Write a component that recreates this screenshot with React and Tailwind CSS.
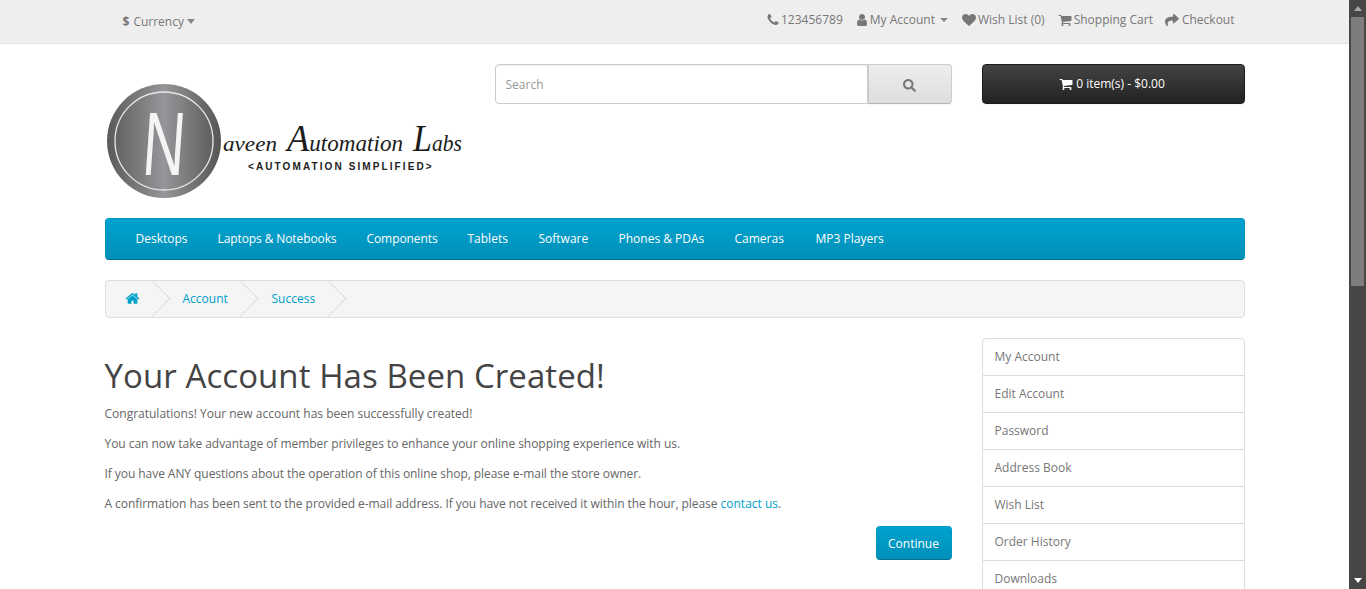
import React from 'react';
import { FaSearch, FaShare } from 'react-icons/fa';

// FontAwesome 4 glyphs, the fa package only ships the newer shapes
const PHONE = 'M1600 1240q0 27-10 70.5t-21 68.5q-21 50-122 106-94 51-186 51-27 0-53-3.5t-57.5-12.5-47-14.5-55.5-20.5-49-18q-98-35-175-83-127-79-264-216t-216-264q-48-77-83-175-3-9-18-49t-20.5-55.5-14.5-47-12.5-57.5-3.5-53q0-92 51-186 56-101 106-122 25-11 68.5-21t70.5-10q14 0 21 3 18 6 53 76 11 19 30 54t35 63.5 31 53.5q3 4 17.5 25t21.5 35.5 7 28.5q0 20-28.5 50t-62 55-62 53-28.5 46q0 9 5 22.5t8.5 20.5 14 24 11.5 19q76 137 174 235t235 174q2 1 19 11.5t24 14 20.5 8.5 22.5 5q18 0 46-28.5t53-62 55-62 50-28.5q14 0 28.5 7t35.5 21.5 25 17.5q25 15 53.5 31t63.5 35 54 30q70 35 76 53 3 7 3 21z';
const USER = 'M1536 1399q0 109-62.5 187t-150.5 78h-854q-88 0-150.5-78t-62.5-187q0-85 8.5-160.5t31.5-152 58.5-131 94-89 134.5-34.5q131 128 313 128t313-128q76 0 134.5 34.5t94 89 58.5 131 31.5 152 8.5 160.5zm-256-887q0 159-112.5 271.5t-271.5 112.5-271.5-112.5-112.5-271.5 112.5-271.5 271.5-112.5 271.5 112.5 112.5 271.5z';
const HEART = 'M896 1664q-26 0-44-18l-624-602q-10-8-27.5-26t-55.5-65.5-68-97.5-53.5-121-23.5-138q0-220 127-344t351-124q62 0 126.5 21.5t120 58 95.5 68.5 76 68q36-36 76-68t95.5-68.5 120-58 126.5-21.5q224 0 351 124t127 344q0 221-229 450l-623 600q-18 18-44 18z';
const CART = 'M704 1536q0 52-38 90t-90 38-90-38-38-90 38-90 90-38 90 38 38 90zm896 0q0 52-38 90t-90 38-90-38-38-90 38-90 90-38 90 38 38 90zm128-1088v512q0 24-16.5 42.5t-40.5 21.5l-1044 122q13 60 13 70 0 16-24 64h920q26 0 45 19t19 45-19 45-45 19h-1024q-26 0-45-19t-19-45q0-11 8-31.5t16-36 21.5-40 15.5-29.5l-177-823h-204q-26 0-45-19t-19-45 19-45 45-19h256q16 0 28.5 6.5t19.5 15.5 13 24.5 8 26 5.5 29.5 4.5 26h1201q26 0 45 19t19 45z';
const HOME = 'M1472 992v480q0 26-19 45t-45 19h-384v-384h-256v384h-384q-26 0-45-19t-19-45v-480q0-1 .5-3t.5-3l575-474 575 474q1 2 1 6zm223-69l-62 74q-8 9-21 11h-3q-13 0-21-7l-692-577-692 577q-12 8-24 7-13-2-21-11l-62-74q-8-10-7-23.5t11-21.5l719-599q32-26 76-26t76 26l244 204v-195q0-14 9-23t23-9h192q14 0 23 9t9 23v408l219 182q10 8 11 21.5t-7 23.5z';

const Fa = ({ d, className }) => (
  <svg viewBox="0 0 1792 1792" fill="currentColor" className={className}>
    <path d={d} />
  </svg>
);

const Caret = () => (
  <span className="inline-block w-0 h-0 border-x-[4px] border-x-transparent border-t-[4px] border-t-[#888]" />
);

// widths hold the text plus the 30px gap, the hinted font of the shot runs a bit narrower
const menuItems = [
  { label: 'Desktops', className: 'w-[82px]' },
  { label: 'Laptops & Notebooks', className: 'w-[149px] tracking-[-0.1px]' },
  { label: 'Components', className: 'w-[101px] tracking-[-0.08px]' },
  { label: 'Tablets', className: 'w-[71px]' },
  { label: 'Software', className: 'w-[80px]' },
  { label: 'Phones & PDAs', className: 'w-[116px]' },
  { label: 'Cameras', className: 'w-[81px]' },
  { label: 'MP3 Players', className: 'w-[100px]' },
];
const sideItems = ['My Account', 'Edit Account', 'Password', 'Address Book', 'Wish List', 'Order History', 'Downloads', 'Recurring payments'];

const Logo = () => (
  <svg width="370" height="150" viewBox="0 0 370 150" className="block">
    <defs>
      <linearGradient id="metal" x1="0" x2="1" y1="0" y2="0">
        <stop offset="0" stopColor="#5a5a5a" />
        <stop offset="0.5" stopColor="#96969a" />
        <stop offset="1" stopColor="#555553" />
      </linearGradient>
    </defs>
    <circle cx="59" cy="77" r="57" fill="url(#metal)" />
    <circle cx="59" cy="77" r="49" fill="none" stroke="#e8e8e8" strokeWidth="1.3" />
    <text transform="translate(57 111) skewX(-4) scale(0.65 1)" textAnchor="middle" fill="#f4f4f4" fontFamily="'Liberation Sans', sans-serif" fontSize="90">N</text>
    <g fill="#1c1c1c" fontFamily="'Liberation Serif', serif" fontStyle="italic">
      <text x="118" y="87" fontSize="21" textLength="54" lengthAdjust="spacingAndGlyphs">aveen</text>
      <text x="182" y="87" fontSize="24" textLength="116" lengthAdjust="spacingAndGlyphs"><tspan fontSize="38">A</tspan>utomation</text>
      <text x="308" y="87" fontSize="24" textLength="49" lengthAdjust="spacingAndGlyphs"><tspan fontSize="38">L</tspan>abs</text>
    </g>
    <text x="143" y="106" fill="#222" fontFamily="'Liberation Sans', sans-serif" fontWeight="700" fontSize="10" letterSpacing="2.1">&lt;AUTOMATION SIMPLIFIED&gt;</text>
  </svg>
);

// the page is cut off at the window height, scrollbar is part of the picture
const Scrollbar = () => (
  <div className="w-[17px] shrink-0 h-full bg-[#464646] flex flex-col items-center">
    <div className="h-[17px] flex items-center justify-center">
      <span className="w-0 h-0 border-x-[4.5px] border-x-transparent border-b-[5px] border-b-[#a8a8a8]" />
    </div>
    <div className="w-[13px] h-[269px] bg-[#7d7d7d]" />
    <div className="flex-1" />
    <div className="h-[17px] flex items-center justify-center">
      <span className="w-0 h-0 border-x-[4.5px] border-x-transparent border-t-[5px] border-t-white" />
    </div>
  </div>
);

const TopLink = ({ d, icon, children, className }) => (
  <a className={`flex items-center text-[#777] ${className}`}>
    {icon || <Fa d={d} className="w-[14px] h-[14px] mr-[1px]" />}
    {children}
  </a>
);

const App = () => {
  return (
    <div className="h-[589px] w-full overflow-hidden flex bg-white text-[12px] leading-[20px] text-[#666] font-['Open_Sans',sans-serif]">
      <div className="flex-1 min-w-0 h-full overflow-hidden">
        <nav className="h-[44px] bg-[#eeeeee] border-b border-[#e2e2e2]">
          <div className="w-[1170px] mx-auto px-[15px] flex justify-between">
            <div className="pl-[18px] pt-[11px] flex items-center h-[32px] text-[#777]">
              <b className="mr-[4px] text-[#777]">$</b>
              <span className="mr-[3px]">Currency</span>
              <span className="inline-block w-0 h-0 border-x-[4.5px] border-x-transparent border-t-[5px] border-t-[#888]" />
            </div>
            <div className="flex h-[39px] items-center pr-[10px] text-[#777]">
              <TopLink d={PHONE} className="mr-[12px]">123456789</TopLink>
              <TopLink d={USER} className="mr-[14px]">My Account<span className="ml-[5px] flex"><Caret /></span></TopLink>
              <TopLink icon={<Fa d={HEART} className="w-[14px] h-[14px] mr-[2px]" />} className="mr-[13px]">Wish List (0)</TopLink>
              <TopLink icon={<Fa d={CART} className="w-[14px] h-[14px] mr-[2px]" />} className="mr-[12px]">Shopping Cart</TopLink>
              <TopLink icon={<FaShare className="w-[14px] h-[14px] mr-[3px]" />}>Checkout</TopLink>
            </div>
          </div>
        </nav>

        <div className="w-[1170px] mx-auto px-[15px]">
          <header className="h-[174px] flex pt-[20px]">
            <div className="w-[390px] shrink-0">
              <Logo />
            </div>
            <div className="w-[457px] shrink-0 flex h-[40px]">
              <div className="flex-1 h-full border border-[#cccccc] rounded-l-[4px] bg-white pl-[10px] pt-[2px] flex items-center text-[#999] shadow-[inset_0_1px_1px_rgba(0,0,0,0.075)]">
                Search
              </div>
              <button className="w-[84px] h-full border border-[#cccccc] border-b-[#b3b3b3] rounded-r-[4px] bg-gradient-to-b from-[#eeeeee] to-[#dddddd] flex items-center justify-center text-[#777] shadow-[0_1px_2px_rgba(0,0,0,0.05)]">
                <FaSearch className="w-[13px] h-[13px] mt-[2px]" />
              </button>
            </div>
            <button className="ml-[30px] w-[263px] h-[40px] rounded-[4px] border border-[#1a1a1a] bg-gradient-to-b from-[#444444] to-[#222222] text-white flex items-center justify-center pr-[2px] shadow-[0_1px_2px_rgba(0,0,0,0.05)]">
              <Fa d={CART} className="w-[14px] h-[14px] mr-[3px]" />
              0 item(s) - $0.00
            </button>
          </header>

          <div className="h-[42px] rounded-[4px] bg-gradient-to-b from-[#00a3cf] to-[#008fb8] border border-[#0096c0] border-b-[#006f8f] flex items-center pl-[30px]">
            {menuItems.map((item) => (
              <a key={item.label} className={`text-white whitespace-nowrap ${item.className}`}>{item.label}</a>
            ))}
          </div>

          <ul className="mt-[20px] h-[38px] border border-[#dddddd] rounded-[4px] bg-[#f5f5f5] flex items-center overflow-hidden">
            <li className="relative w-[58px] h-full flex items-center pl-[19px]">
              <Fa d={HOME} className="w-[15px] h-[15px] mt-[-2px] text-[#00a0cb]" />
              <Chevron />
            </li>
            <li className="relative w-[88px] h-full flex items-center pl-[19px] text-[#00a0cb]">
              Account
              <Chevron />
            </li>
            <li className="relative w-[88px] h-full flex items-center pl-[20px] text-[#00a0cb]">
              Success
              <Chevron />
            </li>
          </ul>

          <div className="flex mt-[20px]">
            <main className="w-[847px] shrink-0">
              <h1 className="text-[33px] leading-[36px] tracking-[0.07px] text-[#444] mt-[20px] mb-[10px]">Your Account Has Been Created!</h1>
              <p className="mb-[10px]">Congratulations! Your new account has been successfully created!</p>
              <p className="mb-[10px] tracking-[-0.04px]">You can now take advantage of member privileges to enhance your online shopping experience with us.</p>
              <p className="mb-[10px] tracking-[-0.06px]">If you have ANY questions about the operation of this online shop, please e-mail the store owner.</p>
              <p className="mb-[10px]">
                <span className="tracking-[-0.06px]">A confirmation has been sent to the provided e-mail address. If you have not received it within the hour, please</span>{' '}
                <a className="text-[#00a0cb]">contact us</a>.
              </p>
              <div className="flex justify-end mt-[12px]">
                <button className="w-[76px] h-[34px] pt-[1px] rounded-[4px] border border-[#0096c0] border-b-[#006f8f] bg-gradient-to-b from-[#00a3cf] to-[#008fb8] text-white">
                  Continue
                </button>
              </div>
            </main>
            <aside className="ml-[30px] w-[263px] shrink-0">
              <div className="border-t border-[#dddddd] rounded-t-[4px]">
                {sideItems.map((item) => (
                  <a key={item} className="block h-[37px] border-x border-b border-[#dddddd] pl-[12px] pt-[8px] text-[#777] first:rounded-t-[4px]">
                    {item}
                  </a>
                ))}
              </div>
            </aside>
          </div>
        </div>
      </div>
      <Scrollbar />
    </div>
  );
};

// breadcrumb arrow, a rotated square poking out over the next item
const Chevron = () => (
  <span className="absolute right-[-1px] top-[4px] w-[27px] h-[27px] rotate-45 border-t border-r border-[#dddddd]" />
);

export default App;
